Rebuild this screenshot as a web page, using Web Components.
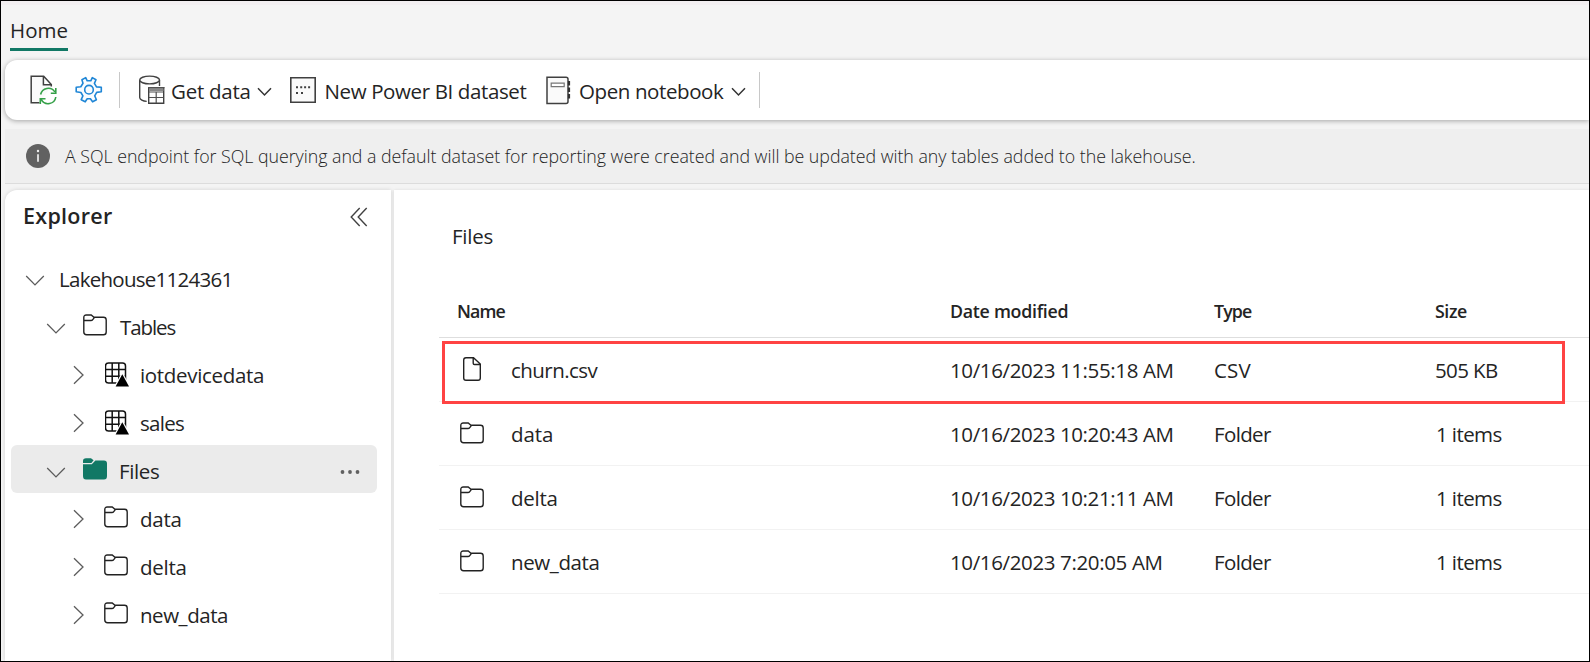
<!DOCTYPE html>
<html lang="en"><head><meta charset="utf-8"><title>Lakehouse</title>
<style>
html,body{margin:0;height:100%}
body{font-family:"Open Sans","Noto Sans",sans-serif;color:#242424;background:#f4f4f4;overflow:hidden}
</style></head>
<body><lake-app></lake-app>
<script>
const define=(name,html)=>{
  const t=document.createElement('template');t.innerHTML=html;
  customElements.define(name,class extends HTMLElement{
    connectedCallback(){
      if(this.shadowRoot)return;
      this.attachShadow({mode:'open'}).append(t.content.cloneNode(true));
    }
  });
};

/* One line of text, tracked so that its drawn glyphs span "w" pixels. */
const ctx=document.createElement('canvas').getContext('2d');
customElements.define('fit-text',class extends HTMLElement{
  connectedCallback(){
    if(this.shadowRoot)return;
    const size=+(this.getAttribute('size')||20.5),weight=this.getAttribute('weight')||400,
      w=+this.getAttribute('w'),text=this.getAttribute('text');
    ctx.font=`${weight} ${size}px "Open Sans"`;
    const m=ctx.measureText(text),ink=m.actualBoundingBoxRight+m.actualBoundingBoxLeft;
    const gap=(w-ink)/(text.length-1);
    const r=this.attachShadow({mode:'open'});
    r.innerHTML=`<style>:host{display:block;white-space:pre;width:${w}px;line-height:24px;font-size:${size}px;font-weight:${weight};letter-spacing:${gap}px}
    span{display:block;margin-left:${m.actualBoundingBoxLeft}px}</style><span></span>`;
    r.querySelector('span').textContent=text;
  }
});

const ICONS={
 refresh:[28,30,`<path d="M9.500 27.800H1.200V1.200h12.500l7.600 8.300v2M13.400 1.500v8.300h7.600" fill="#fafafa" stroke="#404040" stroke-width="1.500"/><path d="M10.600 19.500a7.800 7.800 0 0 1 14.200-2.600M25.800 22a7.800 7.800 0 0 1-14.500 2.700M25.800 13v5.200h-5M10.300 29v-5.200h5.200" fill="none" stroke="#35a048" stroke-width="1.600"/>`],
 gear:[28,28,`<path d="M10.700 1.600 12.200 4.800h3.600l1.500-3.200 3.700 2.100-1.600 3.700 2.100 3.500 4.800.4v4.500l-4.600.6-2 3.400 1.700 3.900-3.800 2.100-2.200-3h-3.200l-2 3-4-2.100 1.700-3.800-2-3.400-4.700-.7v-4.500l4.600-.5 2.200-3.500L6.900 3.700Z" fill="#fafcfe" stroke="#1f86d6" stroke-width="1.600" stroke-linejoin="round"/><circle cx="14" cy="13.700" r="4.300" fill="none" stroke="#1f86d6" stroke-width="1.600"/>`],
 database:[28,30,`<path d="M1.700 5v17.500c0 2 3.300 3.700 7 3.900M21.500 5v6" fill="none" stroke="#404040" stroke-width="1.400"/><ellipse cx="11.600" cy="5" rx="9.900" ry="3.900" fill="#fafafa" stroke="#404040" stroke-width="1.400"/><path d="M10.700 12.700h15v15.500h-15z" fill="#fff" stroke="#404040" stroke-width="1.400"/><path d="M11 14.700h14.500" stroke="#888" stroke-width="2.600"/><path d="M10 12.700h16.400M11 17h14.500M11 22.500h14.500M18.200 17v11" stroke="#505050" stroke-width="1.200"/>`],
 dataset:[26,26,`<path d="M.8.800h24.400v24.400H.8z" fill="#fafafa" stroke="#404040" stroke-width="1.600"/><path d="M6 9.200h2v2H6zm4.200 0h2v2h-2zm3.900 0h2v2h-2zm4 0h2v2h-2zM6 15h2v2H6zm5 0h2v2h-2z" fill="#404040"/>`],
 notebook:[26,29,`<path d="M1 1.200h19q2 0 2 2v22.300q0 2-2 2H1z" fill="#fafafa" stroke="#404040" stroke-width="1.500"/><path d="M5.200 7.200h13v3.500h-13z" fill="#fff" stroke="#777" stroke-width="1.200"/><path d="M23 5v4.500M23 11.500v4.500M23 18v4.500" stroke="#303030" stroke-width="2.200"/>`],
 down:[15,10,`<path d="m1 1.200 6.500 6.700L14 1.200" fill="none" stroke="#333" stroke-width="1.500"/>`],
 treedown:[20,12,`<path d="m1.200 1 8.800 8.900L18.800 1" fill="none" stroke="#5c5c5c" stroke-width="1.300"/>`],
 treeright:[12,20,`<path d="m1 1.200 9 8.800-9 8.800" fill="none" stroke="#5c5c5c" stroke-width="1.300"/>`],
 collapse:[18,20,`<path d="M9.700 1 1.200 10l8.500 9M16.700 1l-8.500 9 8.500 9" fill="none" stroke="#424242" stroke-width="1.400"/>`],
 folder:[24,22,`<path d="M.8 18V3.500Q.8 1 3.300 1h4.900l2.800 2.300h9.500q2.700 0 2.700 2.700v12q0 2.800-2.700 2.800H3.600Q.8 20.800.8 18zM.8 6.500h7.400q1.200 0 2-1.500l1.200-1.700" fill="none" stroke="#222" stroke-width="1.400"/>`],
 folderfill:[24,22,`<path d="M0 5V3Q0 .3 3 .300h5l2.600 2L8.400 5zM0 6.200h8.800l3.600-3.700H21q3 0 3 3V18q0 3.500-3 3.500H3q-3 0-3-3.500z" fill="#117865"/>`],
 file:[18,24,`<path d="M3 .700h7.500L17.300 7v14q0 2.200-2.200 2.200H3Q.7 23.200.7 21V3Q.7.700 3 .7zM10.200 1v5.200q0 1.300 1.300 1.300h5.500" fill="none" stroke="#222" stroke-width="1.400"/>`],
 table:[24,25,`<path d="M3.500 1h14Q20.500 1 20.500 4v14q0 3-3 3h-14q-3 0-3-3V4q0-3 3-3zM7.200 1v20M13.800 1v20M.6 7.500h20M.6 14.200h20" fill="none" stroke="#111" stroke-width="1.500"/><path d="M17.300 9.800 26 25.500H8.700z" fill="#fff"/><path d="M17.300 12.300 24 24.500H10.600z" fill="#000"/>`],
 info:[24,24,`<circle cx="12" cy="12" r="12" fill="#616161"/><path d="M12 10.300v7.500" stroke="#efefef" stroke-width="1.700"/><circle cx="12" cy="7" r="1.200" fill="#efefef"/>`],
 more:[20,6,`<circle cx="2.500" cy="3" r="1.900" fill="#606060"/><circle cx="10" cy="3" r="1.900" fill="#606060"/><circle cx="17.500" cy="3" r="1.900" fill="#606060"/>`]
};
customElements.define('ui-icon',class extends HTMLElement{
  connectedCallback(){
    if(this.shadowRoot)return;
    const [w,h,body]=ICONS[this.getAttribute('name')];
    this.attachShadow({mode:'open'}).innerHTML=`<style>:host{display:block;flex:none;width:${w}px;height:${h}px}svg{display:block}</style><svg width="${w}" height="${h}" viewBox="0 0 ${w} ${h}">${body}</svg>`;
  }
});

define('tool-bar',`<style>
:host{display:flex;align-items:center;box-sizing:border-box;height:60px;margin-left:4px;padding-left:25px;background:#fff;border-radius:12px 0 0 12px;box-shadow:0 1px 5px rgba(0,0,0,.33)}
.rule{width:1px;height:36px;background:#c8c8c8}
fit-text{padding-top:2px}
</style>
<ui-icon name="refresh"></ui-icon><ui-icon name="gear" style="margin-left:17px"></ui-icon>
<div class="rule" style="margin:0 18px 0 16px"></div>
<ui-icon name="database"></ui-icon><fit-text w="77.500" text="Get data" style="margin-left:6px"></fit-text><ui-icon name="down" style="margin:4px 0 0 7px"></ui-icon>
<ui-icon name="dataset" style="margin-left:18px"></ui-icon><fit-text w="200" text="New Power BI dataset" style="margin-left:11px"></fit-text>
<ui-icon name="notebook" style="margin-left:19px"></ui-icon><fit-text w="144" text="Open notebook" style="margin-left:8.500px"></fit-text><ui-icon name="down" style="margin:4px 13px 0 6.500px"></ui-icon>
<div class="rule"></div>`);

define('info-bar',`<style>
:host{display:flex;align-items:center;box-sizing:border-box;height:55px;margin:9px 0 0 4px;padding-left:21px;gap:15px;background:#efefef;border-bottom:1px solid #dcdcdc}
</style><ui-icon name="info"></ui-icon>
<fit-text size="17.800" weight="300" w="1129.500" text="A SQL endpoint for SQL querying and a default dataset for reporting were created and will be updated with any tables added to the lakehouse."></fit-text>`);

customElements.define('tree-item',class extends HTMLElement{
  connectedCallback(){
    if(this.shadowRoot)return;
    const a=n=>this.getAttribute(n),level=+a('level'),icon=a('icon'),open=this.hasAttribute('open');
    const pad=[14,35,59][level];
    this.attachShadow({mode:'open'}).innerHTML=`<style>
:host{display:flex;align-items:center;box-sizing:border-box;height:48px;padding-left:${pad}px;border-radius:6px}
:host([selected]){background:#ebebeb}
.arrow{flex:none;display:flex;justify-content:center;width:${level===2?18:20}px;margin-top:${open?7:4}px}
.glyph{margin:${icon==='table'?'2px 12px 0 17px':level===2?'0 13px 0 16px':'0 13px 0 17px'}}
fit-text{padding-top:3px}
.more{margin:5px 17px 0 auto}
</style><div class="arrow"><ui-icon name="${open?'treedown':'treeright'}"></ui-icon></div>
${icon?`<ui-icon class="glyph" name="${icon}"></ui-icon>`:'<span style="width:16px"></span>'}
<fit-text w="${a('w')}" text="${a('label')}"${this.hasAttribute('selected')?' style="margin-left:1px"':''}></fit-text>${this.hasAttribute('selected')?'<ui-icon class="more" name="more"></ui-icon>':''}`;
  }
});

define('explorer-pane',`<style>
:host{display:block;box-sizing:border-box;width:386px;padding:0 14px 0 6px;background:#fff;border-radius:12px 0 0 0;box-shadow:0 0 4px rgba(0,0,0,.14)}
header{display:flex;align-items:center;height:63px;padding:0 9px 0 14px;justify-content:space-between}
header fit-text{margin-top:-11px}header ui-icon{margin-top:-9px}
</style>
<header><fit-text size="21.500" weight="600" w="87" text="Explorer"></fit-text><ui-icon name="collapse"></ui-icon></header>
<tree-item level="0" open label="Lakehouse1124361" w="168.500"></tree-item>
<tree-item level="1" open icon="folder" label="Tables" w="55.500"></tree-item>
<tree-item level="2" icon="table" label="iotdevicedata" w="122"></tree-item>
<tree-item level="2" icon="table" label="sales" w="43"></tree-item>
<tree-item level="1" open selected icon="folderfill" label="Files" w="38"></tree-item>
<tree-item level="2" icon="folder" label="data" w="39.500"></tree-item>
<tree-item level="2" icon="folder" label="delta" w="44.500"></tree-item>
<tree-item level="2" icon="folder" label="new_data" w="86"></tree-item>`);

customElements.define('file-row',class extends HTMLElement{
  connectedCallback(){
    if(this.shadowRoot)return;
    const cells=this.getAttribute('cells').split('|').map(c=>c.split('~'));
    const head=this.hasAttribute('head'),icon=this.getAttribute('icon');
    const f=head?'size="17.800" weight="600"':'',nudge=icon==='folder'?'padding-left:1px':'';
    this.attachShadow({mode:'open'}).innerHTML=`<style>
:host{position:relative;display:grid;grid-template-columns:512px ${head?263:264}px 221px 1fr;align-items:center;box-sizing:border-box;height:64px;border-bottom:1px solid ${head?'#dedede':'#f2f2f2'}}
:host([head]){height:56px}
.name{display:flex;align-items:center;padding-left:${head?19:0}px}
.slot{display:flex;justify-content:center;width:24px;margin:-1px 28px 0 21px}
fit-text{padding-top:${head?2:0}px}
fit-text:nth-of-type(n+2){${nudge}}
.mark{position:absolute;left:3px;right:24px;top:3px;height:57px;border:3px solid #ff4343}
</style><div class="name">${icon?`<div class="slot"><ui-icon name="${icon}"></ui-icon></div>`:''}<fit-text ${f} w="${cells[0][1]}" text="${cells[0][0]}"></fit-text></div>
${cells.slice(1).map(c=>`<fit-text ${f} w="${c[1]}" text="${c[0]}"></fit-text>`).join('')}
${this.hasAttribute('marked')?'<div class="mark"></div>':''}`;
  }
});

define('file-list',`<style>
:host{display:block;flex:1;background:#fff;padding-left:45px;box-shadow:0 0 3px rgba(0,0,0,.1)}
.title{height:92px;padding:34px 0 0 15px;box-sizing:border-box}
</style>
<div class="title"><fit-text w="38.500" weight="400" text="Files"></fit-text></div>
<file-row head cells="Name~47.500|Date modified~116.500|Type~38|Size~32"></file-row>
<file-row marked icon="file" cells="churn.csv~86.500|10/16/2023 11:55:18 AM~221.500|CSV~36.500|505 KB~62"></file-row>
<file-row icon="folder" cells="data~40|10/16/2023 10:20:43 AM~221.500|Folder~56|1 items~64.500"></file-row>
<file-row icon="folder" cells="delta~44.500|10/16/2023 10:21:11 AM~221.500|Folder~56|1 items~64.500"></file-row>
<file-row icon="folder" cells="new_data~86.500|10/16/2023 7:20:05 AM~210.500|Folder~56|1 items~64.500"></file-row>`);

define('lake-app',`<style>
:host{display:flex;flex-direction:column;box-sizing:border-box;width:1590px;height:662px;border:1px solid #000;background:#f4f4f4;overflow:hidden}
nav{box-sizing:border-box;height:59px;padding:13px 0 0 9px;border-top:4px solid #f2eff1;flex:none}
.tab{width:58px;padding:0 0 6px;border-bottom:3px solid #117865}
.tab fit-text{margin-left:2px}
tool-bar,info-bar{flex:none;position:relative}
.work{display:flex;flex:1;margin:6px 0 0 4px;gap:3px}
</style>
<nav><div class="tab"><fit-text w="55.500" text="Home"></fit-text></div></nav>
<tool-bar></tool-bar><info-bar></info-bar>
<div class="work"><explorer-pane></explorer-pane><file-list></file-list></div>`);
</script></body></html>
